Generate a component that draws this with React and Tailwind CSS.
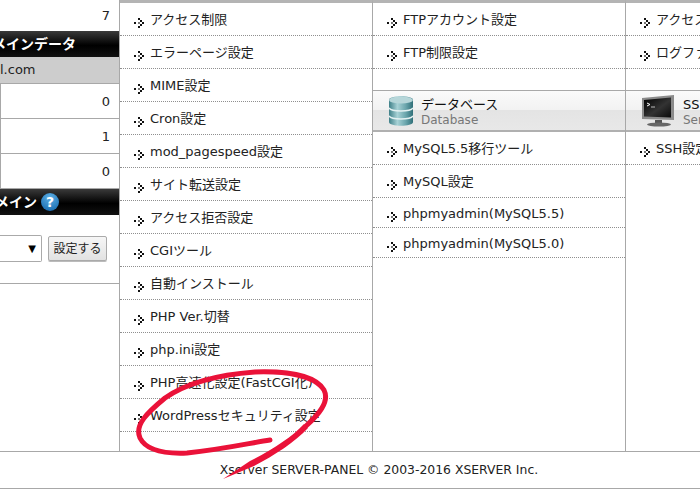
const font = "font-['DejaVu_Sans','Noto_Sans_CJK_JP',sans-serif]";

const Bullet = () => (
  <svg width="10" height="10" viewBox="0 0 10 10" className="shrink-0 mt-[6px]" fill="#111">
    <rect x="0" y="4" width="2" height="2" />
    <rect x="4" y="0" width="2" height="2" />
    <rect x="6" y="2" width="2" height="2" />
    <rect x="8" y="4" width="2" height="2" />
    <rect x="6" y="6" width="2" height="2" />
    <rect x="4" y="8" width="2" height="2" />
    <rect x="4" y="4" width="2" height="2" fill="#777" />
  </svg>
);

const MenuRow = ({ label, short }) => (
  <div className={`flex items-center gap-[6px] pl-[14px] pt-[2px] border-b border-dotted border-[#8f8f8f] whitespace-nowrap ${short ? 'h-[30px]' : 'h-[33px]'}`}>
    <Bullet />
    <span>{label}</span>
  </div>
);

const DbIcon = () => (
  <svg width="26" height="32" viewBox="0 0 26 32" className="shrink-0">
    <defs>
      <linearGradient id="db" x1="0" x2="1" y1="0" y2="0">
        <stop offset="0" stopColor="#3f8088" />
        <stop offset="0.35" stopColor="#a8d2d6" />
        <stop offset="0.7" stopColor="#6aa5ac" />
        <stop offset="1" stopColor="#2f6f78" />
      </linearGradient>
    </defs>
    <path d="M1 5c0-5 24-5 24 0v22c0 5-24 5-24 0z" fill="url(#db)" />
    <ellipse cx="13" cy="5" rx="12" ry="3.6" fill="#b6d6d9" />
    <path d="M1 13c3 4 21 4 24 0M1 21c3 4 21 4 24 0" fill="none" stroke="#e4f1f2" strokeWidth="1.4" />
  </svg>
);

const MonitorIcon = () => (
  <svg width="34" height="32" viewBox="0 0 34 32" className="shrink-0">
    <defs>
      <linearGradient id="scr" x1="0" x2="1" y1="0" y2="1">
        <stop offset="0" stopColor="#000" />
        <stop offset="0.55" stopColor="#333" />
        <stop offset="1" stopColor="#0a0a0a" />
      </linearGradient>
    </defs>
    <path d="M1 3l32-3v25l-32-1z" fill="#8b8b8b" />
    <path d="M3 5l27-2.500v20l-27-1z" fill="url(#scr)" />
    <path d="M6 8l3 1.500-3 1.500" fill="none" stroke="#fff" strokeWidth="1" />
    <path d="M10 12h4" stroke="#bbb" strokeWidth="1" />
    <path d="M14 25h7v3h-7z" fill="#555" />
    <ellipse cx="18" cy="29.500" rx="12" ry="2" fill="#666" />
  </svg>
);

const SectionHeader = ({ icon, title, sub, gap }) => (
  <div className="flex items-center h-[42px] pl-[15px] border-t border-b-2 border-t-[#a8a8a8] border-b-[#b0b0b0] bg-[linear-gradient(#fafafa_0%,#f2f2f2_48%,#e4e4e4_50%,#e8e8e8_100%)] whitespace-nowrap" style={{ gap }}>
    {icon}
    <div className="flex flex-col pt-[2px]">
      <span className="text-[13px] leading-[16px] text-[#111]">{title}</span>
      <span className="text-[12px] leading-[14px] text-[#777]">{sub}</span>
    </div>
  </div>
);

const BlackBar = ({ children }) => (
  <div className="flex items-center h-[26px] bg-[linear-gradient(#3a3a3a,#000_55%,#111)] text-white font-bold text-[14px] whitespace-nowrap overflow-hidden">
    {children}
  </div>
);

const CountRow = ({ value }) => (
  <div className="flex items-center justify-end h-[35px] pr-[9px] pt-[1px] border-l border-b border-[#a8a8a8]">{value}</div>
);

const col2 = [
  'アクセス制限', 'エラーページ設定', 'MIME設定', 'Cron設定', 'mod_pagespeed設定', 'サイト転送設定', 'アクセス拒否設定',
  'CGIツール', '自動インストール', 'PHP Ver.切替', 'php.ini設定', 'PHP高速化設定(FastCGI化)', 'WordPressセキュリティ設定',
];

export default function App() {
  return (
    <div className={`relative w-[700px] h-[500px] overflow-hidden bg-white text-[13px] text-[#222] ${font}`}>
      <div className="flex h-[451px]">
        {/* left side panel */}
        <div className="w-[120px] shrink-0 border-r border-[#a8a8a8] flex flex-col">
          <div className="h-[31px] flex items-center justify-end pr-[9px]">7</div>
          <BlackBar><span className="-ml-[22px]">ドメインデータ</span></BlackBar>
          <div className="h-[27px] flex items-center bg-[#cdcdcd] border-b border-[#a8a8a8] overflow-hidden">l.com</div>
          <CountRow value="0" />
          <CountRow value="1" />
          <CountRow value="0" />
          <BlackBar>
            <span className="-ml-[5px]">メイン</span>
            <span className="ml-[4px] w-[18px] h-[18px] rounded-full bg-[radial-gradient(circle_at_50%_25%,#5db0e6,#0f62a8)] flex items-center justify-center text-[14px] leading-none">?</span>
          </BlackBar>
          <div className="h-[69px] border-b border-[#a8a8a8] flex items-start pt-[20px] gap-[6px]">
            <div className="w-[42px] h-[27px] shrink-0 border border-l-0 border-[#aaa] rounded-r-[2px] flex items-center justify-end pr-[5px] text-[10px] text-black">▼</div>
            <button className="w-[59px] h-[25px] mt-[1px] shrink-0 border border-[#aaa] rounded-[2px] bg-[linear-gradient(#f6f6f6,#e2e2e2)] text-[12px] text-[#222] leading-none shadow-[0_1px_0_#bbb]">設定する</button>
          </div>
        </div>

        {/* menu column 1 */}
        <div className="w-[253px] shrink-0 border-r border-t-[3px] border-r-[#a8a8a8] border-t-[#b4b4b4]">
          {col2.map((label) => <MenuRow key={label} label={label} />)}
        </div>

        {/* menu column 2 */}
        <div className="w-[253px] shrink-0 border-r border-t-[3px] border-r-[#a8a8a8] border-t-[#b4b4b4]">
          <MenuRow label="FTPアカウント設定" />
          <MenuRow label="FTP制限設定" />
          <div className="h-[21px]" />
          <SectionHeader icon={<DbIcon />} title="データベース" sub="Database" gap="7px" />
          <MenuRow label="MySQL5.5移行ツール" />
          <MenuRow label="MySQL設定" />
          <MenuRow label="phpmyadmin(MySQL5.5)" short />
          <MenuRow label="phpmyadmin(MySQL5.0)" short />
        </div>

        {/* menu column 3, cut off by the window */}
        <div className="flex-1 min-w-0 overflow-hidden border-t-[3px] border-t-[#b4b4b4]">
          <MenuRow label="アクセスログ" />
          <MenuRow label="ログファイル" />
          <div className="h-[21px]" />
          <SectionHeader icon={<MonitorIcon />} title="SSH設定" sub="Server" gap="8px" />
          <MenuRow label="SSH設定" />
        </div>
      </div>

      <div className="h-[38px] border-t border-b border-[#a8a8a8] flex items-center justify-center pl-[58px] whitespace-nowrap text-[12.4px]">
        Xserver SERVER-PANEL © 2003-2016 XSERVER Inc.
      </div>

      {/* hand-drawn red circle over the page */}
      <svg className="absolute left-0 top-0 pointer-events-none" width="700" height="500" viewBox="0 0 700 500" fill="none">
        <path
          d="M270 440C250 443 225 449 187 453C165 454 146 450 140 438C134 425 148 412 165 398C185 384 215 375 255 372C285 371 315 375 324 390C330 402 318 415 306 426"
          stroke="#ea1239"
          strokeWidth="5"
          strokeLinecap="round"
          strokeLinejoin="round"
        />
        <path d="M304 424C292 437 272 450 250 461L223 479L254 466C275 455 295 442 308 428z" fill="#ea1239" />
      </svg>
    </div>
  );
}
